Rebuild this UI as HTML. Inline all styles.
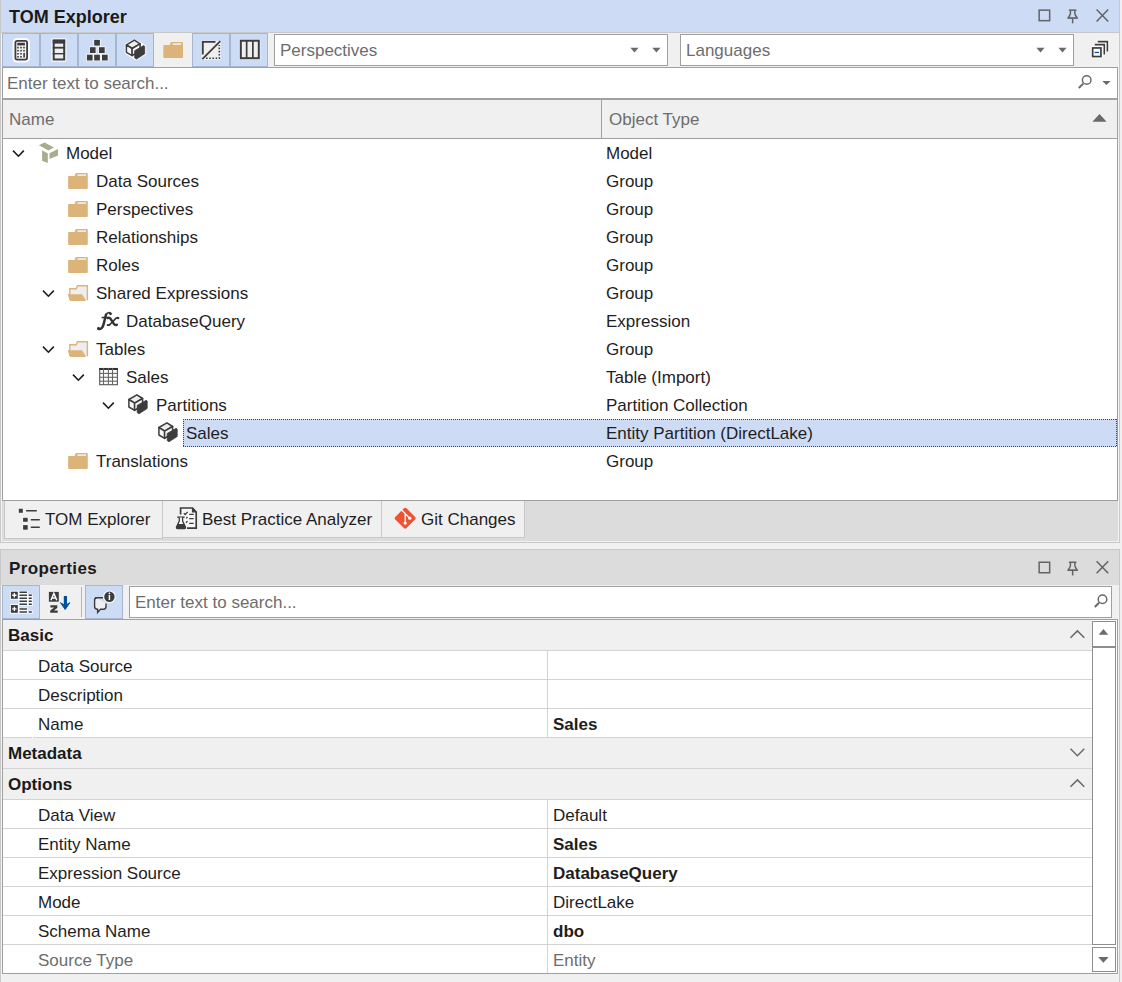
<!DOCTYPE html>
<html><head><meta charset="utf-8"><style>
html,body{margin:0;padding:0;width:1122px;height:982px;overflow:hidden;background:#F0F0F0}
body{position:relative;font-family:"Liberation Sans",sans-serif}
body>div{position:absolute}
.t{white-space:nowrap;line-height:20px;font-family:"Liberation Sans",sans-serif}
b{font-weight:700}
</style></head><body>
<div style="left:0px;top:0px;width:1122px;height:982px;background:#F0F0F0;"></div>
<div style="left:1px;top:0px;width:1118px;height:32px;background:#CEDBF4;"></div>
<div style="left:1px;top:32px;width:1118px;height:1px;background:#C8C8C8;"></div>
<div class="t" style="left:9px;top:7px;font-size:18px;font-weight:700;color:#1A1A1A;">TOM Explorer</div>
<svg style="position:absolute;left:1030px;top:0px;" width="90" height="32" viewBox="1030 0 90 32"><rect x="1039.15" y="10.15" width="10.5" height="10.5" fill="none" stroke="#626466" stroke-width="1.5"/><path d="M1068.9 10.15 H1076.4" stroke="#626466" stroke-width="1.5"/><path d="M1070.2 10.15 Q1071.4 14.15 1068.3 17.55 M1075.1 10.15 Q1073.9 14.15 1077 17.55" fill="none" stroke="#626466" stroke-width="1.5"/><path d="M1067.4 18.05 H1077.9" stroke="#626466" stroke-width="1.7"/><path d="M1072.65 18.65 V23.35" stroke="#626466" stroke-width="1.5"/><path d="M1096.6 9.6 l11.6 11.9 M1108.2 9.6 l-11.6 11.9" fill="none" stroke="#626466" stroke-width="1.5"/></svg>
<div style="left:1px;top:33px;width:1118px;height:34px;background:#F0F0F0;"></div>
<div style="left:2px;top:33px;width:38px;height:34px;box-sizing:border-box;border:1px solid #A6B6CF;background:#CDDCF5;"></div>
<div style="left:40px;top:33px;width:38px;height:34px;box-sizing:border-box;border:1px solid #A6B6CF;background:#CDDCF5;"></div>
<div style="left:78px;top:33px;width:38px;height:34px;box-sizing:border-box;border:1px solid #A6B6CF;background:#CDDCF5;"></div>
<div style="left:116px;top:33px;width:38px;height:34px;box-sizing:border-box;border:1px solid #A6B6CF;background:#CDDCF5;"></div>
<div style="left:192px;top:33px;width:38px;height:34px;box-sizing:border-box;border:1px solid #A6B6CF;background:#CDDCF5;"></div>
<div style="left:230px;top:33px;width:38px;height:34px;box-sizing:border-box;border:1px solid #A6B6CF;background:#CDDCF5;"></div>
<svg style="position:absolute;left:0px;top:33px;" width="270" height="34" viewBox="0 33 270 34"><rect x="14.5" y="40" width="13.5" height="20.5" rx="2.5" fill="#fff" stroke="#fff" stroke-opacity="0.85" stroke-linejoin="round" stroke-width="4"/><rect x="15.4" y="40.9" width="11.7" height="18.7" rx="1.8" fill="#F2F2F2" stroke="#3C3C3C" stroke-width="1.8"/><rect x="17.3" y="42.8" width="7.6" height="2.6" fill="#3C3C3C"/><rect x="17.2" y="46.800000000000004" width="1.6" height="1.6" fill="#3C3C3C"/><rect x="17.2" y="49.900000000000006" width="1.6" height="1.6" fill="#3C3C3C"/><rect x="17.2" y="53.0" width="1.6" height="1.6" fill="#3C3C3C"/><rect x="17.2" y="56.0" width="1.6" height="1.6" fill="#3C3C3C"/><rect x="20.2" y="46.800000000000004" width="1.6" height="1.6" fill="#3C3C3C"/><rect x="20.2" y="49.900000000000006" width="1.6" height="1.6" fill="#3C3C3C"/><rect x="20.2" y="53.0" width="1.6" height="1.6" fill="#3C3C3C"/><rect x="20.2" y="56.0" width="1.6" height="1.6" fill="#3C3C3C"/><rect x="23.2" y="46.800000000000004" width="1.6" height="1.6" fill="#3C3C3C"/><rect x="23.2" y="49.900000000000006" width="1.6" height="1.6" fill="#3C3C3C"/><rect x="23.3" y="53" width="1.6" height="4.6" fill="#3C3C3C"/><rect x="52.7" y="39.6" width="12.5" height="20.9" fill="#fff" stroke="#fff" stroke-opacity="0.85" stroke-linejoin="round" stroke-width="2.5"/><rect x="53.7" y="40.6" width="10.5" height="18.9" fill="#EEE" stroke="#3C3C3C" stroke-width="2"/><rect x="52.7" y="39.6" width="12.5" height="4" fill="#3C3C3C"/><rect x="52.7" y="46.8" width="12.5" height="1.8" fill="#3C3C3C"/><rect x="52.7" y="53" width="12.5" height="1.4" fill="#3C3C3C"/><rect x="93.4" y="39.0" width="7.3" height="7.3" fill="#fff" fill-opacity="0.85"/><rect x="89.10000000000001" y="46.400000000000006" width="7.3" height="7.3" fill="#fff" fill-opacity="0.85"/><rect x="98.2" y="46.400000000000006" width="7.3" height="7.3" fill="#fff" fill-opacity="0.85"/><rect x="86.10000000000001" y="53.900000000000006" width="7.3" height="7.3" fill="#fff" fill-opacity="0.85"/><rect x="93.4" y="53.900000000000006" width="7.3" height="7.3" fill="#fff" fill-opacity="0.85"/><rect x="101.2" y="53.900000000000006" width="7.3" height="7.3" fill="#fff" fill-opacity="0.85"/><rect x="94.2" y="39.8" width="5.7" height="5.8" fill="#3C3C3C"/><rect x="89.9" y="47.2" width="5.7" height="5.8" fill="#3C3C3C"/><rect x="99" y="47.2" width="5.7" height="5.8" fill="#3C3C3C"/><rect x="86.9" y="54.7" width="5.7" height="5.8" fill="#3C3C3C"/><rect x="94.2" y="54.7" width="5.7" height="5.8" fill="#3C3C3C"/><rect x="102" y="54.7" width="5.7" height="5.8" fill="#3C3C3C"/><polygon points="134.40,40.10 141.00,43.50 145.30,46.10 145.30,54.00 136.50,59.40 132.10,57.00 125.70,53.00 125.70,44.30" fill="#fff" fill-opacity="0.9" stroke="#fff" stroke-opacity="0.85" stroke-width="2.0" stroke-linejoin="round"/><polygon points="134.40,40.10 126.40,44.80 132.10,48.50 140.10,43.80" fill="#EDEDED" stroke="#3C3C3C" stroke-width="1.5" stroke-linejoin="round"/><polygon points="126.40,44.80 126.40,52.30 132.10,55.70 132.10,48.50" fill="#F7F7F7" stroke="#3C3C3C" stroke-width="1.5" stroke-linejoin="round"/><polygon points="132.10,48.50 140.10,43.80 140.10,50.50 132.10,55.70" fill="#F7F7F7" stroke="#3C3C3C" stroke-width="1.5" stroke-linejoin="round"/><polygon points="134.70,50.70 143.70,45.60 144.70,46.30 144.70,53.80 136.50,59.10 134.70,57.90" fill="#3C3C3C" stroke="#3C3C3C" stroke-width="0.8" stroke-linejoin="round"/><path d="M170.9 42 h11.2 q0.9 0 0.9 0.9 V57.1 q0 0.9 -0.9 0.9 H164.20000000000002 q-0.9 0 -0.9 -0.9 V45.9 q0 -0.9 0.9 -0.9 H169.70000000000002 z" fill="#DCB47A"/><rect x="172.70000000000002" y="43.1" width="8.6" height="1.9" fill="#EDE6DC"/><rect x="201.8" y="40.8" width="18.8" height="18.8" fill="#fff" fill-opacity="0.8"/><polygon points="203,42 219.5,42 219.5,58.5 203,58.5" fill="#EFEFEF"/><path d="M202.8 54.5 V41.8 H215.5" fill="none" stroke="#3C3C3C" stroke-width="1.8"/><path d="M202.3 59.2 L220.3 41.2" fill="none" stroke="#3C3C3C" stroke-width="1.8"/><path d="M206 58.3 H219.3 V45" fill="none" stroke="#3C3C3C" stroke-width="1.6" stroke-dasharray="1.6 1.6"/><rect x="239.3" y="39.2" width="21" height="20.5" fill="#fff" fill-opacity="0.8"/><rect x="240.8" y="40.7" width="18" height="17.5" fill="#EFEFEF" stroke="#3C3C3C" stroke-width="2"/><rect x="245.8" y="40" width="1.7" height="19" fill="#3C3C3C"/><rect x="252" y="40" width="1.7" height="19" fill="#3C3C3C"/></svg>
<div style="left:274px;top:34px;width:394px;height:32px;box-sizing:border-box;border:1px solid #A0A0A0;background:#fff;"></div>
<div class="t" style="left:280px;top:41px;font-size:17px;font-weight:400;color:#6D6D6D;">Perspectives</div>
<div style="left:680px;top:34px;width:394px;height:32px;box-sizing:border-box;border:1px solid #A0A0A0;background:#fff;"></div>
<div class="t" style="left:686px;top:41px;font-size:17px;font-weight:400;color:#6D6D6D;">Languages</div>
<svg style="position:absolute;left:620px;top:34px;" width="50" height="32" viewBox="620 34 50 32"><path d="M630.4 47.8h8.2l-4.1 4.6z" fill="#6A6A6A"/><path d="M652.3 47.8h8.2l-4.1 4.6z" fill="#6A6A6A"/></svg>
<svg style="position:absolute;left:1026px;top:34px;" width="50" height="32" viewBox="1026 34 50 32"><path d="M1036.4 47.8h8.2l-4.1 4.6z" fill="#6A6A6A"/><path d="M1058.4 47.8h8.2l-4.1 4.6z" fill="#6A6A6A"/></svg>
<svg style="position:absolute;left:1084px;top:36px;" width="30" height="28" viewBox="1084 36 30 28"><path d="M1097.8 41.6 H1107.4 V51.5 M1094.8 44.6 H1104.3 V54.5" fill="none" stroke="#fff" stroke-opacity="0.9" stroke-width="3.5"/><rect x="1091" y="46.3" width="11.6" height="11.9" fill="#fff"/><path d="M1097.8 41.6 H1107.4 V51.5 M1094.8 44.6 H1104.3 V54.5" fill="none" stroke="#3C3C3C" stroke-width="1.6"/><rect x="1092.65" y="47.95" width="8.3" height="8.6" fill="#fff" stroke="#3C3C3C" stroke-width="1.7"/><rect x="1094.6" y="51.8" width="4.4" height="1.3" fill="#0050A0"/></svg>
<div style="left:2px;top:67px;width:1116px;height:33px;box-sizing:border-box;border:1px solid #A0A0A0;background:#fff;"></div>
<div class="t" style="left:7px;top:74px;font-size:17px;font-weight:400;color:#6D6D6D;">Enter text to search...</div>
<svg style="position:absolute;left:1074px;top:70px;" width="44" height="26" viewBox="1074 70 44 26"><circle cx="1086.7" cy="80" r="4.3" fill="none" stroke="#6A6A6A" stroke-width="1.5"/><path d="M1083.2 83.6 L1078.8 88" stroke="#6A6A6A" stroke-width="2"/><path d="M1102.3 80.9h8.3l-4.15 4.1z" fill="#6A6A6A"/></svg>
<div style="left:2px;top:100px;width:1116px;height:38px;background:#F0F0F0;"></div>
<div style="left:2px;top:98px;width:1116px;height:1px;background:#A0A0A0;"></div>
<div style="left:2px;top:99px;width:1116px;height:1px;background:#A0A0A0;"></div>
<div style="left:2px;top:138px;width:1116px;height:1px;background:#A0A0A0;"></div>
<div style="left:601px;top:100px;width:1px;height:38px;background:#A0A0A0;"></div>
<div class="t" style="left:9px;top:110px;font-size:17px;font-weight:400;color:#6D6D6D;">Name</div>
<div class="t" style="left:609px;top:110px;font-size:17px;font-weight:400;color:#6D6D6D;">Object Type</div>
<svg style="position:absolute;left:1088px;top:110px;" width="24" height="14" viewBox="1088 110 24 14"><path d="M1092.4 121.7 h14.2 l-7.1 -7.6 z" fill="#6A6A6A"/></svg>
<div style="left:2px;top:139px;width:1116px;height:361px;background:#fff;"></div>
<div style="left:2px;top:67px;width:1px;height:434px;background:#A0A0A0;"></div>
<div style="left:1117px;top:67px;width:1px;height:434px;background:#A0A0A0;"></div>
<div style="left:2px;top:500px;width:1116px;height:1px;background:#A0A0A0;"></div>
<div class="t" style="left:66px;top:144px;font-size:17px;font-weight:400;color:#1E1E1E;">Model</div>
<div class="t" style="left:606px;top:144px;font-size:17px;font-weight:400;color:#1E1E1E;">Model</div>
<div class="t" style="left:96px;top:172px;font-size:17px;font-weight:400;color:#1E1E1E;">Data Sources</div>
<div class="t" style="left:606px;top:172px;font-size:17px;font-weight:400;color:#1E1E1E;">Group</div>
<div class="t" style="left:96px;top:200px;font-size:17px;font-weight:400;color:#1E1E1E;">Perspectives</div>
<div class="t" style="left:606px;top:200px;font-size:17px;font-weight:400;color:#1E1E1E;">Group</div>
<div class="t" style="left:96px;top:228px;font-size:17px;font-weight:400;color:#1E1E1E;">Relationships</div>
<div class="t" style="left:606px;top:228px;font-size:17px;font-weight:400;color:#1E1E1E;">Group</div>
<div class="t" style="left:96px;top:256px;font-size:17px;font-weight:400;color:#1E1E1E;">Roles</div>
<div class="t" style="left:606px;top:256px;font-size:17px;font-weight:400;color:#1E1E1E;">Group</div>
<div class="t" style="left:96px;top:284px;font-size:17px;font-weight:400;color:#1E1E1E;">Shared Expressions</div>
<div class="t" style="left:606px;top:284px;font-size:17px;font-weight:400;color:#1E1E1E;">Group</div>
<div class="t" style="left:126px;top:312px;font-size:17px;font-weight:400;color:#1E1E1E;">DatabaseQuery</div>
<div class="t" style="left:606px;top:312px;font-size:17px;font-weight:400;color:#1E1E1E;">Expression</div>
<div class="t" style="left:96px;top:340px;font-size:17px;font-weight:400;color:#1E1E1E;">Tables</div>
<div class="t" style="left:606px;top:340px;font-size:17px;font-weight:400;color:#1E1E1E;">Group</div>
<div class="t" style="left:126px;top:368px;font-size:17px;font-weight:400;color:#1E1E1E;">Sales</div>
<div class="t" style="left:606px;top:368px;font-size:17px;font-weight:400;color:#1E1E1E;">Table (Import)</div>
<div class="t" style="left:156px;top:396px;font-size:17px;font-weight:400;color:#1E1E1E;">Partitions</div>
<div class="t" style="left:606px;top:396px;font-size:17px;font-weight:400;color:#1E1E1E;">Partition Collection</div>
<div style="left:183px;top:419px;width:934px;height:28px;background:repeating-linear-gradient(90deg,#444 0 1px,transparent 1px 2px) 0 0/100% 1px no-repeat,repeating-linear-gradient(90deg,#444 0 1px,transparent 1px 2px) 0 100%/100% 1px no-repeat,repeating-linear-gradient(180deg,#444 0 1px,transparent 1px 2px) 0 0/1px 100% no-repeat,repeating-linear-gradient(180deg,#444 0 1px,transparent 1px 2px) 100% 0/1px 100% no-repeat,#CEDBF4"></div>
<div class="t" style="left:186px;top:424px;font-size:17px;font-weight:400;color:#1E1E1E;">Sales</div>
<div class="t" style="left:606px;top:424px;font-size:17px;font-weight:400;color:#1E1E1E;">Entity Partition (DirectLake)</div>
<div class="t" style="left:96px;top:452px;font-size:17px;font-weight:400;color:#1E1E1E;">Translations</div>
<div class="t" style="left:606px;top:452px;font-size:17px;font-weight:400;color:#1E1E1E;">Group</div>
<svg style="position:absolute;left:3px;top:139px;" width="1114" height="361" viewBox="3 139 1114 361"><path d="M12.999999999999998 150.6 l5.4 5.6 5.4-5.6" fill="none" stroke="#1E1E1E" stroke-width="1.6"/><polygon points="38.9,145.2 44.5,142.4 54,147.5 48.4,150.6" fill="#A6AE8C"/><polygon points="42.1,150.2 47.8,153.5 47.8,162.9 42.1,160.7" fill="#A6AE8C"/><polygon points="49.5,153.2 58,149 58,155.4 49.5,159.1" fill="#A6AE8C"/><path d="M75.69999999999999 173 h11.2 q0.9 0 0.9 0.9 V188.1 q0 0.9 -0.9 0.9 H69.0 q-0.9 0 -0.9 -0.9 V176.9 q0 -0.9 0.9 -0.9 H74.5 z" fill="#DCB47A"/><rect x="77.5" y="174.1" width="8.6" height="1.9" fill="#EDE6DC"/><path d="M75.69999999999999 201 h11.2 q0.9 0 0.9 0.9 V216.1 q0 0.9 -0.9 0.9 H69.0 q-0.9 0 -0.9 -0.9 V204.9 q0 -0.9 0.9 -0.9 H74.5 z" fill="#DCB47A"/><rect x="77.5" y="202.1" width="8.6" height="1.9" fill="#EDE6DC"/><path d="M75.69999999999999 229 h11.2 q0.9 0 0.9 0.9 V244.1 q0 0.9 -0.9 0.9 H69.0 q-0.9 0 -0.9 -0.9 V232.9 q0 -0.9 0.9 -0.9 H74.5 z" fill="#DCB47A"/><rect x="77.5" y="230.1" width="8.6" height="1.9" fill="#EDE6DC"/><path d="M75.69999999999999 257 h11.2 q0.9 0 0.9 0.9 V272.1 q0 0.9 -0.9 0.9 H69.0 q-0.9 0 -0.9 -0.9 V260.9 q0 -0.9 0.9 -0.9 H74.5 z" fill="#DCB47A"/><rect x="77.5" y="258.1" width="8.6" height="1.9" fill="#EDE6DC"/><path d="M43.0 290.6 l5.4 5.6 5.4-5.6" fill="none" stroke="#1E1E1E" stroke-width="1.6"/><path d="M69.8 300.1 V288.70000000000005 H76.2 L77.5 285.70000000000005 H87.4 V300.3" fill="#EEEEF2" stroke="#DCB47A" stroke-width="1.4"/><polygon points="67.5,294.20000000000005 82.2,294.20000000000005 86.2,300.90000000000003 70.2,300.90000000000003" fill="#DCB47A"/><g transform="translate(0 0)" fill="none" stroke="#333" stroke-linecap="round"><path d="M110.6 313.4 C109.6 312.2 107.2 312.3 106.1 314.6" stroke-width="1.6"/><path d="M106.1 314.6 C105.2 316.6 104.3 322.5 103.1 325.8 C102.2 328.4 100.4 329.5 98.4 328.8" stroke-width="2.5"/><circle cx="110.5" cy="313.8" r="1.4" fill="#333" stroke="none"/><circle cx="98.5" cy="328.3" r="1.4" fill="#333" stroke="none"/><path d="M102.3 317.5 H107.8" stroke-width="1.7"/><path d="M107.7 318.1 Q109.4 317.1 110.6 318.8 L113.9 323.9 Q115.1 325.7 116.9 324.7" stroke-width="2.4"/><path d="M118.4 317.9 Q117.3 317.1 116.1 318.2 L109.9 324.5 Q108.7 325.6 107.5 325.0" stroke-width="1.7"/><circle cx="118.1" cy="318.1" r="1.2" fill="#333" stroke="none"/></g><path d="M43.0 346.6 l5.4 5.6 5.4-5.6" fill="none" stroke="#1E1E1E" stroke-width="1.6"/><path d="M69.8 356.1 V344.70000000000005 H76.2 L77.5 341.70000000000005 H87.4 V356.3" fill="#EEEEF2" stroke="#DCB47A" stroke-width="1.4"/><polygon points="67.5,350.20000000000005 82.2,350.20000000000005 86.2,356.90000000000003 70.2,356.90000000000003" fill="#DCB47A"/><path d="M73.0 374.6 l5.4 5.6 5.4-5.6" fill="none" stroke="#1E1E1E" stroke-width="1.6"/><rect x="99.19999999999999" y="368" width="18.7" height="17" fill="#fff"/><rect x="99.69999999999999" y="368.5" width="17.7" height="16.2" fill="none" stroke="#555" stroke-width="1.1"/><rect x="99.19999999999999" y="368" width="18.7" height="2" fill="#333"/><rect x="102.94999999999999" y="368" width="1.1" height="17" fill="#666"/><rect x="107.85" y="368" width="1.1" height="17" fill="#666"/><rect x="111.94999999999999" y="368" width="1.1" height="17" fill="#666"/><rect x="99.19999999999999" y="372.84999999999997" width="18.7" height="1.1" fill="#666"/><rect x="99.19999999999999" y="376.75" width="18.7" height="1.1" fill="#666"/><rect x="99.19999999999999" y="380.65" width="18.7" height="1.1" fill="#666"/><path d="M103.0 402.6 l5.4 5.6 5.4-5.6" fill="none" stroke="#1E1E1E" stroke-width="1.6"/><polygon points="136.90,394.80 143.50,398.20 147.80,400.80 147.80,408.70 139.00,414.10 134.60,411.70 128.20,407.70 128.20,399.00" fill="#fff" fill-opacity="0.9" stroke="#fff" stroke-opacity="0.85" stroke-width="2.0" stroke-linejoin="round"/><polygon points="136.90,394.80 128.90,399.50 134.60,403.20 142.60,398.50" fill="#EDEDED" stroke="#3C3C3C" stroke-width="1.5" stroke-linejoin="round"/><polygon points="128.90,399.50 128.90,407.00 134.60,410.40 134.60,403.20" fill="#F7F7F7" stroke="#3C3C3C" stroke-width="1.5" stroke-linejoin="round"/><polygon points="134.60,403.20 142.60,398.50 142.60,405.20 134.60,410.40" fill="#F7F7F7" stroke="#3C3C3C" stroke-width="1.5" stroke-linejoin="round"/><polygon points="137.20,405.40 146.20,400.30 147.20,401.00 147.20,408.50 139.00,413.80 137.20,412.60" fill="#3C3C3C" stroke="#3C3C3C" stroke-width="0.8" stroke-linejoin="round"/><polygon points="166.90,422.80 173.50,426.20 177.80,428.80 177.80,436.70 169.00,442.10 164.60,439.70 158.20,435.70 158.20,427.00" fill="#fff" fill-opacity="0.9" stroke="#fff" stroke-opacity="0.85" stroke-width="2.0" stroke-linejoin="round"/><polygon points="166.90,422.80 158.90,427.50 164.60,431.20 172.60,426.50" fill="#EDEDED" stroke="#3C3C3C" stroke-width="1.5" stroke-linejoin="round"/><polygon points="158.90,427.50 158.90,435.00 164.60,438.40 164.60,431.20" fill="#F7F7F7" stroke="#3C3C3C" stroke-width="1.5" stroke-linejoin="round"/><polygon points="164.60,431.20 172.60,426.50 172.60,433.20 164.60,438.40" fill="#F7F7F7" stroke="#3C3C3C" stroke-width="1.5" stroke-linejoin="round"/><polygon points="167.20,433.40 176.20,428.30 177.20,429.00 177.20,436.50 169.00,441.80 167.20,440.60" fill="#3C3C3C" stroke="#3C3C3C" stroke-width="0.8" stroke-linejoin="round"/><path d="M75.69999999999999 453 h11.2 q0.9 0 0.9 0.9 V468.1 q0 0.9 -0.9 0.9 H69.0 q-0.9 0 -0.9 -0.9 V456.9 q0 -0.9 0.9 -0.9 H74.5 z" fill="#DCB47A"/><rect x="77.5" y="454.1" width="8.6" height="1.9" fill="#EDE6DC"/></svg>
<div style="left:1px;top:501px;width:1118px;height:41px;background:#DCDCDC;"></div>
<div style="left:1px;top:541px;width:1118px;height:1px;background:#F2F2F2;"></div>
<div style="left:1px;top:33px;width:1px;height:509px;background:#F4F4F4;"></div>
<div style="left:1118px;top:33px;width:1px;height:509px;background:#F4F4F4;"></div>
<div style="left:0px;top:542px;width:1120px;height:1px;background:#C8C8C8;"></div>
<div style="left:0px;top:549px;width:1120px;height:1px;background:#C8C8C8;"></div>
<div style="left:4px;top:501px;width:159px;height:38px;background:#F0F0F0;"></div>
<div style="left:4px;top:501px;width:1px;height:38px;background:#C8C8C8;"></div>
<div style="left:162px;top:501px;width:1px;height:38px;background:#C8C8C8;"></div>
<div style="left:4px;top:538px;width:159px;height:1px;background:#C8C8C8;"></div>
<div style="left:163px;top:501px;width:219px;height:37px;background:#F0F0F0;"></div>
<div style="left:381px;top:501px;width:1px;height:37px;background:#C8C8C8;"></div>
<div style="left:163px;top:537px;width:219px;height:1px;background:#C8C8C8;"></div>
<div style="left:382px;top:501px;width:143px;height:37px;background:#F0F0F0;"></div>
<div style="left:524px;top:501px;width:1px;height:37px;background:#C8C8C8;"></div>
<div style="left:382px;top:537px;width:143px;height:1px;background:#C8C8C8;"></div>
<div class="t" style="left:45px;top:510px;font-size:17px;font-weight:400;color:#1E1E1E;">TOM Explorer</div>
<div class="t" style="left:202px;top:510px;font-size:17px;font-weight:400;color:#1E1E1E;">Best Practice Analyzer</div>
<div class="t" style="left:421px;top:510px;font-size:17px;font-weight:400;color:#1E1E1E;">Git Changes</div>
<svg style="position:absolute;left:0px;top:501px;" width="540" height="40" viewBox="0 501 540 40"><g stroke="#fff" stroke-opacity="0.85" stroke-linejoin="round" stroke-width="0"></g><rect x="18.3" y="508.2" width="5" height="5" fill="#fff" fill-opacity="0.8"/><rect x="18.8" y="508.7" width="4" height="4.1" fill="#3C3C3C"/><rect x="22.6" y="517.3" width="5.6" height="5" fill="#fff" fill-opacity="0.8"/><rect x="23.1" y="517.8" width="4.6" height="4" fill="#3C3C3C"/><rect x="22.6" y="524.6" width="5.6" height="5.6" fill="#fff" fill-opacity="0.8"/><rect x="23.1" y="525.1" width="4.6" height="4.6" fill="#3C3C3C"/><path d="M26.1 510.7 H36.8 M30.8 519.8 H39.8 M30.8 527.2 H39.8" stroke="#3C3C3C" stroke-width="1.5"/><path d="M180.6 514.6 V508 H192.5 L196.2 512 V528.1 H187" fill="#F7F7F7" stroke="#3C3C3C" stroke-width="1.7"/><path d="M192.5 508.2 V511.8 H196" fill="#3C3C3C" stroke="#3C3C3C" stroke-width="1.2"/><path d="M183.8 513.3 l1.4 1.2 l2.5 -2.6" fill="none" stroke="#3C3C3C" stroke-width="1.3"/><path d="M189.2 514.3 H193.7 M189.2 518.7 H193.7 M189.2 523.4 H193.7 M186.4 518.5 l1 -1.6 M186 522.7 l1.4 -1.6" stroke="#3C3C3C" stroke-width="1.3"/><path d="M177.3 517.2 H184.6" stroke="#3C3C3C" stroke-width="1.5"/><path d="M179.3 517.5 V521 L176.5 527 Q176.2 528.6 177.6 528.6 H184.4 Q185.8 528.6 185.4 527 L182.6 521 V517.5" fill="#F7F7F7" stroke="#3C3C3C" stroke-width="1.3"/><path d="M177.6 524 H184.3 L185.6 527.4 Q185.8 528.6 184.4 528.6 H177.6 Q176.2 528.6 176.4 527.4 Z" fill="#3C3C3C"/><rect x="397.3" y="510.3" width="15.8" height="15.8" rx="1.8" transform="rotate(45 405.2 518.2)" fill="#F05133"/><path d="M401.6 510 L405.2 513.6 V523 M405.4 514 L409.8 518.2" fill="none" stroke="#fff" stroke-width="1.3"/><circle cx="405.2" cy="523.1" r="1.6" fill="#fff"/><circle cx="409.8" cy="518.2" r="1.6" fill="#fff"/></svg>
<div style="left:1px;top:550px;width:1118px;height:35px;background:#DCDCDC;"></div>
<div class="t" style="left:9px;top:559px;font-size:17px;font-weight:700;color:#1A1A1A;letter-spacing:0.4px;">Properties</div>
<svg style="position:absolute;left:1030px;top:550px;" width="90" height="34" viewBox="1030 550 90 34"><rect x="1039.15" y="562.25" width="10.5" height="10.5" fill="none" stroke="#626466" stroke-width="1.5"/><path d="M1068.9 562.25 H1076.4" stroke="#626466" stroke-width="1.5"/><path d="M1070.2 562.25 Q1071.4 566.25 1068.3 569.65 M1075.1 562.25 Q1073.9 566.25 1077 569.65" fill="none" stroke="#626466" stroke-width="1.5"/><path d="M1067.4 570.15 H1077.9" stroke="#626466" stroke-width="1.7"/><path d="M1072.65 570.75 V575.45" stroke="#626466" stroke-width="1.5"/><path d="M1096.6 561.3 l11.6 11.9 M1108.2 561.3 l-11.6 11.9" fill="none" stroke="#626466" stroke-width="1.5"/></svg>
<div style="left:1px;top:585px;width:1118px;height:34px;background:#F0F0F0;"></div>
<div style="left:2px;top:585px;width:38px;height:34px;box-sizing:border-box;border:1px solid #A6B6CF;background:#CDDCF5;"></div>
<div style="left:85px;top:585px;width:38px;height:34px;box-sizing:border-box;border:1px solid #A6B6CF;background:#CDDCF5;"></div>
<div style="left:81px;top:587px;width:1px;height:30px;background:#B4B4B4;"></div>
<div style="left:129px;top:586px;width:983px;height:32px;box-sizing:border-box;border:1px solid #A0A0A0;background:#fff;"></div>
<div class="t" style="left:135px;top:593px;font-size:17px;font-weight:400;color:#6D6D6D;">Enter text to search...</div>
<svg style="position:absolute;left:1090px;top:588px;" width="22" height="28" viewBox="1090 588 22 28"><circle cx="1102.5" cy="599.2" r="4.3" fill="none" stroke="#6A6A6A" stroke-width="1.5"/><path d="M1099 602.8 L1094.8 607" stroke="#6A6A6A" stroke-width="2"/></svg>
<svg style="position:absolute;left:0px;top:585px;" width="130" height="34" viewBox="0 585 130 34"><path d="M10 590.8 H19 V599.8 H10 Z M10 604 H19 V613.8 H10 Z M18.6 591 H28 V594.5 H32.8 V606 H18.6 Z M18.6 607.5 H28 V610.5 H32.8 V613.8 H18.6 Z" fill="#fff" fill-opacity="0.85"/><rect x="10.9" y="591.7" width="6.9" height="7.1" fill="#3C3C3C"/><rect x="10.9" y="605" width="6.9" height="7.8" fill="#3C3C3C"/><path d="M12.2 595.25 H16.5 M14.35 593.1 V597.4 M12.2 608.9 H16.5 M14.35 606.75 V611.05" stroke="#fff" stroke-width="1.3"/><path d="M19.5 592.3 H27 M19.5 595.3 H27 M19.5 598.3 H27 M19.5 601.3 H27 M19.5 604.3 H27 M19.5 609 H27 M19.5 612 H27 M28.7 595.3 H31.8 M28.7 598.3 H31.8 M28.7 601.3 H31.8 M28.7 604.3 H31.8 M28.7 612 H31.8 " stroke="#3C3C3C" stroke-width="1.5"/><rect x="48.9" y="591.9" width="9.9" height="9.8" fill="#3C3C3C"/><path d="M50.9 600.3 L53.85 593.4 L56.8 600.3 M51.9 598 H55.8" fill="none" stroke="#fff" stroke-width="1.4"/><path d="M50.4 606.4 H57.3 M56.9 606.9 L50.9 611.3 M50.2 611.6 H57.7" fill="none" stroke="#3C3C3C" stroke-width="2.2"/><path d="M65.4 596 V606" stroke="#0050A0" stroke-width="3.2"/><path d="M60.5 602.7 L65.2 609.5 L69.8 602.7 L65.2 605.5 Z" fill="#0050A0" stroke="#0050A0" stroke-width="1"/><path d="M95 597.8 H103 M106 603.5 V606.5 Q106 609.2 103.5 609.2 H100.5 L97.6 612.4 V609.2 Q94.6 609.2 94.6 606.5 V600.3 Q94.6 597.8 97 597.8" fill="#EFEFF2" stroke="#3C3C3C" stroke-width="1.4"/><circle cx="109.4" cy="596.7" r="6.3" fill="#fff" fill-opacity="0.85"/><circle cx="109.4" cy="596.7" r="5.2" fill="#3C3C3C"/><path d="M109.4 595 V600" stroke="#fff" stroke-width="1.5"/><circle cx="109.4" cy="593.3" r="0.9" fill="#fff"/></svg>
<div style="left:2px;top:619px;width:1116px;height:355px;box-sizing:border-box;border:1px solid #A0A0A0;background:#fff;"></div>
<div style="left:3px;top:620px;width:1089px;height:30px;background:#F0F0F0;"></div>
<div class="t" style="left:8px;top:626px;font-size:17px;font-weight:700;color:#1A1A1A;">Basic</div>
<div style="left:3px;top:650px;width:1089px;height:1px;background:#D3D3D3;"></div>
<div class="t" style="left:38px;top:657px;font-size:17px;font-weight:400;color:#1E1E1E;">Data Source</div>
<div style="left:547px;top:651px;width:1px;height:28px;background:#D3D3D3;"></div>
<div style="left:3px;top:679px;width:1089px;height:1px;background:#D3D3D3;"></div>
<div class="t" style="left:38px;top:686px;font-size:17px;font-weight:400;color:#1E1E1E;">Description</div>
<div style="left:547px;top:680px;width:1px;height:28px;background:#D3D3D3;"></div>
<div style="left:3px;top:708px;width:1089px;height:1px;background:#D3D3D3;"></div>
<div class="t" style="left:38px;top:715px;font-size:17px;font-weight:400;color:#1E1E1E;">Name</div>
<div style="left:547px;top:709px;width:1px;height:28px;background:#D3D3D3;"></div>
<div class="t" style="left:553px;top:715px;font-size:17px;font-weight:400;color:#1E1E1E;"><b>Sales</b></div>
<div style="left:3px;top:737px;width:1089px;height:1px;background:#D3D3D3;"></div>
<div style="left:3px;top:738px;width:1089px;height:30px;background:#F0F0F0;"></div>
<div class="t" style="left:8px;top:744px;font-size:17px;font-weight:700;color:#1A1A1A;">Metadata</div>
<div style="left:3px;top:768px;width:1089px;height:1px;background:#D3D3D3;"></div>
<div style="left:3px;top:769px;width:1089px;height:30px;background:#F0F0F0;"></div>
<div class="t" style="left:8px;top:775px;font-size:17px;font-weight:700;color:#1A1A1A;">Options</div>
<div style="left:3px;top:799px;width:1089px;height:1px;background:#D3D3D3;"></div>
<div class="t" style="left:38px;top:806px;font-size:17px;font-weight:400;color:#1E1E1E;">Data View</div>
<div style="left:547px;top:800px;width:1px;height:28px;background:#D3D3D3;"></div>
<div class="t" style="left:553px;top:806px;font-size:17px;font-weight:400;color:#1E1E1E;">Default</div>
<div style="left:3px;top:828px;width:1089px;height:1px;background:#D3D3D3;"></div>
<div class="t" style="left:38px;top:835px;font-size:17px;font-weight:400;color:#1E1E1E;">Entity Name</div>
<div style="left:547px;top:829px;width:1px;height:28px;background:#D3D3D3;"></div>
<div class="t" style="left:553px;top:835px;font-size:17px;font-weight:400;color:#1E1E1E;"><b>Sales</b></div>
<div style="left:3px;top:857px;width:1089px;height:1px;background:#D3D3D3;"></div>
<div class="t" style="left:38px;top:864px;font-size:17px;font-weight:400;color:#1E1E1E;">Expression Source</div>
<div style="left:547px;top:858px;width:1px;height:28px;background:#D3D3D3;"></div>
<div class="t" style="left:553px;top:864px;font-size:17px;font-weight:400;color:#1E1E1E;"><b>DatabaseQuery</b></div>
<div style="left:3px;top:886px;width:1089px;height:1px;background:#D3D3D3;"></div>
<div class="t" style="left:38px;top:893px;font-size:17px;font-weight:400;color:#1E1E1E;">Mode</div>
<div style="left:547px;top:887px;width:1px;height:28px;background:#D3D3D3;"></div>
<div class="t" style="left:553px;top:893px;font-size:17px;font-weight:400;color:#1E1E1E;">DirectLake</div>
<div style="left:3px;top:915px;width:1089px;height:1px;background:#D3D3D3;"></div>
<div class="t" style="left:38px;top:922px;font-size:17px;font-weight:400;color:#1E1E1E;">Schema Name</div>
<div style="left:547px;top:916px;width:1px;height:28px;background:#D3D3D3;"></div>
<div class="t" style="left:553px;top:922px;font-size:17px;font-weight:400;color:#1E1E1E;"><b>dbo</b></div>
<div style="left:3px;top:944px;width:1089px;height:1px;background:#D3D3D3;"></div>
<div class="t" style="left:38px;top:951px;font-size:17px;font-weight:400;color:#6D6D6D;">Source Type</div>
<div style="left:547px;top:945px;width:1px;height:28px;background:#D3D3D3;"></div>
<div class="t" style="left:553px;top:951px;font-size:17px;font-weight:400;color:#6D6D6D;">Entity</div>
<svg style="position:absolute;left:1060px;top:620px;" width="32" height="180" viewBox="1060 620 32 180"><path d="M1070.5 637.8 l6.9 -6.9 6.9 6.9" fill="none" stroke="#6A6A6A" stroke-width="1.5"/><path d="M1070.5 748.8 l6.9 6.9 6.9 -6.9" fill="none" stroke="#6A6A6A" stroke-width="1.5"/><path d="M1070.5 786.8 l6.9 -6.9 6.9 6.9" fill="none" stroke="#6A6A6A" stroke-width="1.5"/></svg>
<div style="left:32px;top:737px;width:1px;height:1px;background:#fff;"></div>
<div style="left:1092px;top:620px;width:25px;height:353px;background:#fff;"></div>
<div style="left:1092px;top:621px;width:24px;height:26px;box-sizing:border-box;border:1px solid #8E8E8E;background:#fff;"></div>
<div style="left:1092px;top:647px;width:24px;height:298px;box-sizing:border-box;border:1px solid #8E8E8E;background:#fff;"></div>
<div style="left:1092px;top:947px;width:24px;height:25px;box-sizing:border-box;border:1px solid #8E8E8E;background:#fff;"></div>
<svg style="position:absolute;left:1092px;top:621px;" width="24" height="26" viewBox="1092 621 24 26"><path d="M1098.7 634.8 h9.5 l-4.75 -5.9z" fill="#6A6A6A"/></svg>
<svg style="position:absolute;left:1092px;top:947px;" width="24" height="25" viewBox="1092 947 24 25"><path d="M1098.2 957 h10.4 l-5.2 5.8z" fill="#6A6A6A"/></svg>
<div style="left:0px;top:0px;width:1px;height:543px;background:#C8C8C8;"></div>
<div style="left:1119px;top:0px;width:1px;height:543px;background:#C8C8C8;"></div>
<div style="left:0px;top:549px;width:1px;height:433px;background:#C8C8C8;"></div>
<div style="left:1119px;top:549px;width:1px;height:433px;background:#C8C8C8;"></div>
<div style="left:1px;top:585px;width:1px;height:397px;background:#F4F4F4;"></div>
<div style="left:1118px;top:585px;width:1px;height:397px;background:#F4F4F4;"></div>
</body></html>
